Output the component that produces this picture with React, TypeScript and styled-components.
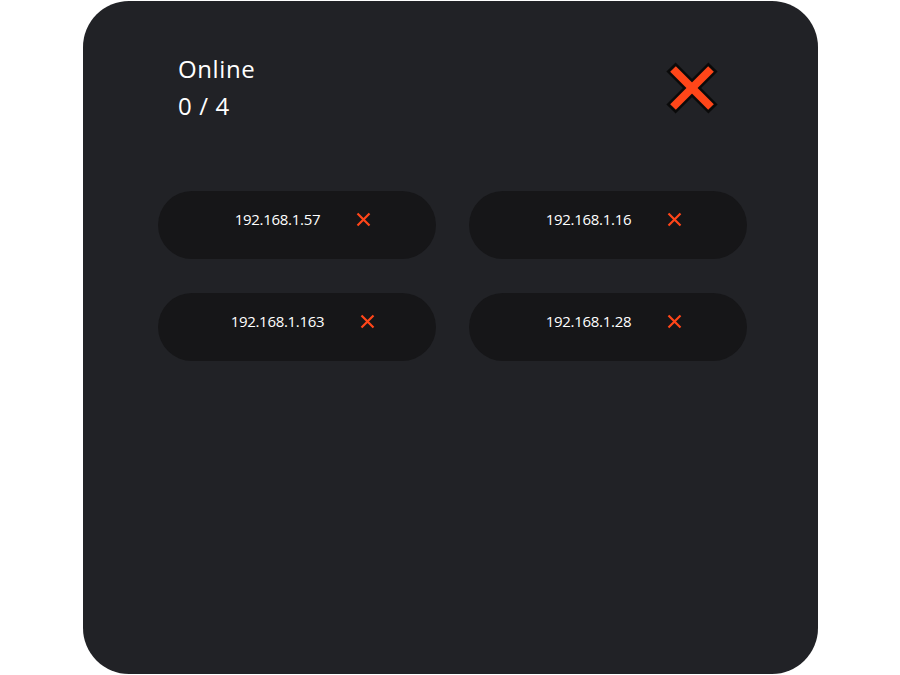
import React from "react";
import styled, { createGlobalStyle } from "styled-components";

const Global = createGlobalStyle`
  html, body { margin: 0; padding: 0; background: #ffffff; }
  body { font-family: "Open Sans", "Noto Sans", sans-serif; }
`;

const Page = styled.div`
  width: 900px;
  height: 675px;
  display: flex;
  justify-content: flex-start;
  padding: 1px 0 0 83px;
  box-sizing: border-box;
`;

const Panel = styled.section`
  width: 735px;
  height: 673px;
  background: #212226;
  border-radius: 46px;
  box-sizing: border-box;
  padding: 49px 71px 0 75px;
  display: flex;
  flex-direction: column;
`;

const Header = styled.header`
  display: flex;
  justify-content: space-between;
  align-items: flex-start;
  padding: 0 29px 0 20px;
`;

const TitleBlock = styled.div`
  display: flex;
  flex-direction: column;
  color: #ffffff;
  font-size: 24px;
  line-height: 37px;
  letter-spacing: 0.6px;
`;

const CloseButton = styled.button`
  background: none;
  border: none;
  padding: 0;
  margin-top: 12px;
  width: 52px;
  height: 52px;
  cursor: pointer;
  display: flex;
`;

const Grid = styled.div`
  margin-top: 67px;
  display: grid;
  grid-template-columns: 1fr 1fr;
  column-gap: 33px;
  row-gap: 34px;
`;

const Pill = styled.div`
  height: 68px;
  border-radius: 34px;
  background: #161618;
  display: flex;
  align-items: center;
  justify-content: center;
  gap: 36px;
  padding: 0 0 12px 12px;
  box-sizing: border-box;
  color: #ffffff;
  font-size: 15px;
  letter-spacing: -0.3px;
`;

const SmallX = styled.span`
  display: flex;
  width: 15px;
  height: 15px;
`;

const BigX = () => (
  <svg width="52" height="52" viewBox="0 0 52 52">
    <g strokeLinecap="butt">
      <line x1="5" y1="5" x2="47" y2="47" stroke="#0a0a0a" strokeWidth="13" />
      <line x1="47" y1="5" x2="5" y2="47" stroke="#0a0a0a" strokeWidth="13" />
      <line x1="7" y1="7" x2="45" y2="45" stroke="#ff4619" strokeWidth="8" />
      <line x1="45" y1="7" x2="7" y2="45" stroke="#ff4619" strokeWidth="8" />
    </g>
  </svg>
);

const Cross = () => (
  <SmallX>
    <svg width="15" height="15" viewBox="0 0 15 15">
      <path d="M1.5 1.5 L13.5 13.5 M13.5 1.5 L1.5 13.5" stroke="#ff4619" strokeWidth="2.2" />
    </svg>
  </SmallX>
);

const hosts = ["192.168.1.57", "192.168.1.16", "192.168.1.163", "192.168.1.28"];

export default function App() {
  return (
    <>
      <Global />
      <Page>
        <Panel>
          <Header>
            <TitleBlock>
              <span>Online</span>
              <span>0 / 4</span>
            </TitleBlock>
            <CloseButton aria-label="close">
              <BigX />
            </CloseButton>
          </Header>
          <Grid>
            {hosts.map((h) => (
              <Pill key={h}>
                <span>{h}</span>
                <Cross />
              </Pill>
            ))}
          </Grid>
        </Panel>
      </Page>
    </>
  );
}
